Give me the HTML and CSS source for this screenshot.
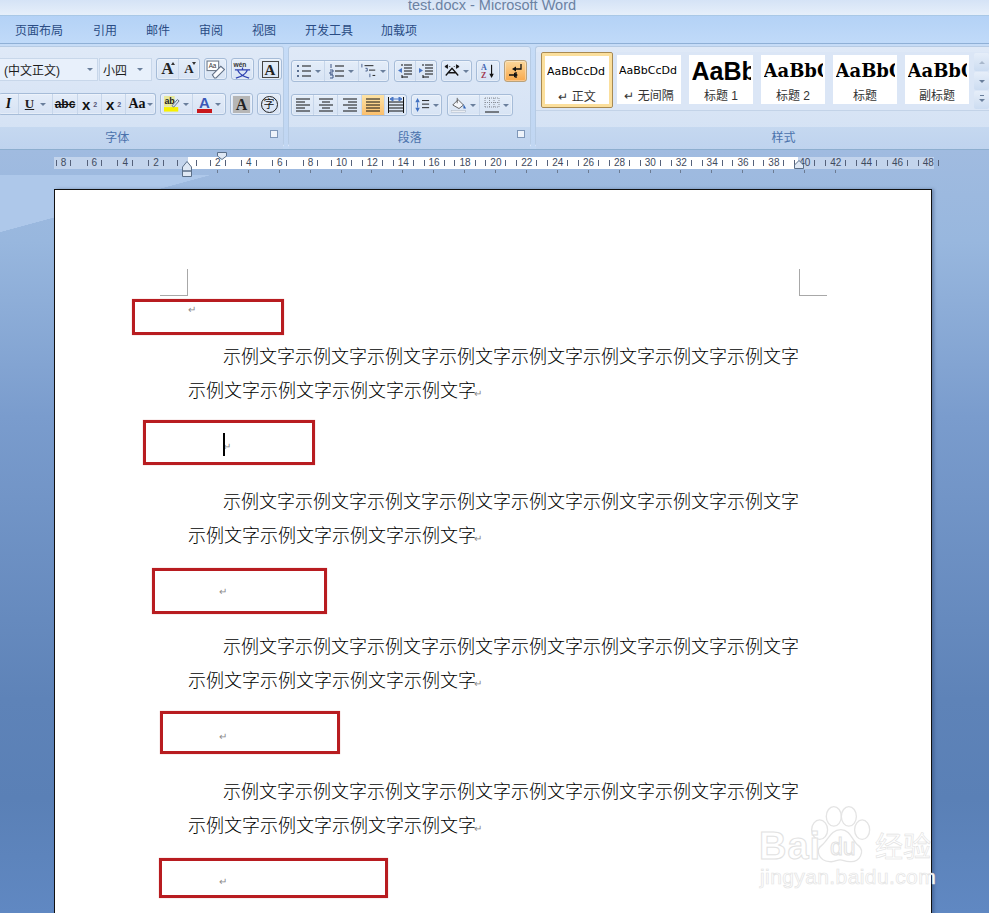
FILE: index.html
```html
<!DOCTYPE html>
<html lang="zh-CN">
<head>
  <meta charset="UTF-8">
  <title>test.docx - Microsoft Word</title>
  <link rel="stylesheet" href="styles.css">
</head>
<body>
  <div class="titlebar">test.docx - Microsoft Word</div>

  <nav class="tabs">
    <span class="tab tab-layout">页面布局</span>
    <span class="tab tab-ref">引用</span>
    <span class="tab tab-mail">邮件</span>
    <span class="tab tab-review">审阅</span>
    <span class="tab tab-view">视图</span>
    <span class="tab tab-dev">开发工具</span>
    <span class="tab tab-addin">加载项</span>
  </nav>

  <div class="ribbon">
    <!-- 字体 -->
    <section class="group group-font">
      <div class="group-body">
        <div class="row row-font-1">
          <div class="combo combo-font"><span>(中文正文)</span><i class="caret"></i></div>
          <div class="combo combo-size"><span>小四</span><i class="caret"></i></div>
          <div class="bgroup">
            <span class="btn w22 serif-a">A<i class="mini-up"></i></span>
            <span class="btn w20 serif-a small-a">A<i class="mini-down"></i></span>
          </div>
          <span class="bgroup btn w23">
            <svg class="ico ico-lg" viewBox="0 0 18 18"><rect x="1" y="1" width="11" height="9" fill="#fff" stroke="#6f7a8a"/><text x="2.500" y="8" class="svg-txt">Aa</text><path d="M6 14l8-8 3.500 3-8 8H8z" fill="#fbfcff" stroke="#5f6f85"/></svg>
          </span>
          <span class="bgroup btn w23">
            <svg class="ico ico-lg" viewBox="0 0 20 20"><text x="0.500" y="7" class="svg-wen">wén</text><path d="M10 8v2M2 10.500h16M5 11c2 4 6 6.500 12 8M15 11c-2 4-6 6.500-12 8" fill="none" stroke="#2b3fb0" stroke-width="1.300"/></svg>
          </span>
          <span class="bgroup btn w24"><b class="boxed-a">A</b></span>
        </div>
        <div class="row row-font-2">
          <div class="bgroup">
            <span class="btn w20 fmt-i">I</span>
            <span class="btn w34 fmt-u">U<i class="caret"></i></span>
            <span class="btn w25 fmt-s">abc</span>
            <span class="btn w24 fmt-x">x<sub>2</sub></span>
            <span class="btn w24 fmt-x">x<sup>2</sup></span>
            <span class="btn w29 fmt-aa">Aa<i class="caret"></i></span>
          </div>
          <div class="bgroup">
            <span class="btn w32">
              <svg class="ico" viewBox="0 0 18 18"><rect x="0" y="0" width="12" height="12" fill="#e8e89a"/><rect x="0" y="12.500" width="16" height="5" fill="#f7f000"/><text x="0.500" y="9" class="svg-ab">ab</text><path d="M9 11l6-7 2 1.500-6 7z" fill="#d9e2f0" stroke="#5f6f88"/></svg>
              <i class="caret"></i>
            </span>
            <span class="btn w32 color-a"><span class="color-a-in">A</span><i class="caret"></i></span>
          </div>
          <span class="bgroup btn w23"><b class="shade-a">A</b></span>
          <span class="bgroup btn w24"><span class="circle-zi">字</span></span>
        </div>
      </div>
      <div class="group-label">字体<i class="launcher"></i></div>
    </section>

    <!-- 段落 -->
    <section class="group group-para">
      <div class="group-body">
        <div class="row row-para-1">
          <div class="bgroup">
            <span class="btn w33">
              <svg class="ico" viewBox="0 0 16 16"><path d="M1 2h2v2H1zM1 7h2v2H1zM1 12h2v2H1z" fill="#5a6f90"/><path d="M6 3h9M6 8h9M6 13h9" stroke="#111" fill="none"/></svg>
              <i class="caret"></i>
            </span>
            <span class="btn w34">
              <svg class="ico" viewBox="0 0 16 16"><path d="M2 1v4M1 7h3v2H1v2h3M1 12h3v3H1" stroke="#3d5584" fill="none"/><path d="M6 3h9M6 8h9M6 13h9" stroke="#111" fill="none"/></svg>
              <i class="caret"></i>
            </span>
            <span class="btn w29">
              <svg class="ico" viewBox="0 0 18 18"><path d="M1 1v4M5 6h2v3h-2M10 12v4" stroke="#3d5584" fill="none"/><path d="M4 3h10M9 8h7M13 14h3" stroke="#111" fill="none"/></svg>
              <i class="caret"></i>
            </span>
          </div>
          <div class="bgroup gap-extra">
            <span class="btn w21">
              <svg class="ico" viewBox="0 0 16 16"><path d="M7 2h8M7 5h8M7 8h8M7 11h8M5 14h6M5 1v2M5 12v3" stroke="#111" fill="none"/><path d="M5 5L1 7.500 5 10z" fill="#4a76c4"/></svg>
            </span>
            <span class="btn w20">
              <svg class="ico" viewBox="0 0 16 16"><path d="M7 2h8M7 5h8M7 8h8M7 11h8M5 14h6M5 1v2M5 12v3" stroke="#111" fill="none"/><path d="M1 5l4 2.500-4 2.500z" fill="#4a76c4"/></svg>
            </span>
          </div>
          <span class="bgroup btn w31">
            <svg class="ico" viewBox="0 0 18 16"><path d="M2 13L9 5l7 8M4 10h10" stroke="#111" stroke-width="1.500" fill="none"/><path d="M1 3l3-2v4zM17 3l-3-2v4zM6 3h1M11 3h1" fill="#111" stroke="#111"/></svg>
            <i class="caret"></i>
          </span>
          <span class="bgroup btn w24">
            <svg class="ico" viewBox="0 0 18 18"><text x="1" y="8" class="svg-az blue-az">A</text><text x="1" y="17" class="svg-az red-az">Z</text><path d="M13 2v13" stroke="#111" fill="none" stroke-width="1.300"/><path d="M10.500 12h5L13 17z" fill="#111"/></svg>
          </span>
          <span class="bgroup btn w23 active-dark">
            <svg class="ico" viewBox="0 0 16 16"><path d="M13 1v5H7M1 12h7M8 9v6" stroke="#111" stroke-width="1.300" fill="none"/><path d="M8 3.500v5L4 6zM6 9.500v5L10 12z" fill="#111"/></svg>
          </span>
        </div>
        <div class="row row-para-2">
          <div class="bgroup">
            <span class="btn w22"><svg class="ico" viewBox="0 0 16 16"><path d="M1 2h14M1 5h9M1 8h14M1 11h9M1 14h14" stroke="#111" fill="none"/></svg></span>
            <span class="btn w24"><svg class="ico" viewBox="0 0 16 16"><path d="M1 2h14M4 5h8M1 8h14M4 11h8M1 14h14" stroke="#111" fill="none"/></svg></span>
            <span class="btn w24"><svg class="ico" viewBox="0 0 16 16"><path d="M1 2h14M6 5h9M1 8h14M6 11h9M1 14h14" stroke="#111" fill="none"/></svg></span>
            <span class="btn w23 active"><svg class="ico" viewBox="0 0 16 16"><path d="M1 2h14M1 5h14M1 8h14M1 11h14M1 14h14" stroke="#111" fill="none"/></svg></span>
            <span class="btn w21"><svg class="ico" viewBox="0 0 16 16"><path d="M1 5h14M1 8h14M1 11h14M1 14h14M0.500 0v16M15.500 0v16" stroke="#111" fill="none"/><path d="M2 2l3-2v4zM14 2l-3-2v4zM5 2h6" fill="#4a76c4" stroke="#4a76c4"/></svg></span>
          </div>
          <span class="bgroup btn w31">
            <svg class="ico" viewBox="0 0 16 18"><path d="M3 1L0.500 6h5zM3 17l-2.500-5h5z" fill="#3f6fc0"/><path d="M3 6v6" stroke="#3f6fc0" fill="none"/><path d="M8 4h8M8 8h8M8 12h8" stroke="#111" fill="none"/></svg>
            <i class="caret"></i>
          </span>
          <div class="bgroup gap-extra">
            <span class="btn w32">
              <svg class="ico" viewBox="0 0 18 18"><path d="M2 9l6-6 6 6-5 4z" fill="#f4f6fa" stroke="#555"/><path d="M7 1v6" stroke="#555" fill="none"/><path d="M14 8l3 5-3 0z" fill="#2f62b5"/><rect x="0" y="15" width="16" height="2" fill="#f4f6fa" stroke="#9aa5b5" stroke-width=".5"/></svg>
              <i class="caret"></i>
            </span>
            <span class="btn w32">
              <svg class="ico" viewBox="0 0 16 16"><path d="M1 1h14M1 5.500h14M1 10h14M1 1v9M5.500 1v9M10 1v9M15 1v9" stroke="#8a8f98" stroke-dasharray="1 1" fill="none"/><path d="M1 15h14" stroke="#111" fill="none"/></svg>
              <i class="caret"></i>
            </span>
          </div>
        </div>
      </div>
      <div class="group-label">段落<i class="launcher"></i></div>
    </section>

    <!-- 样式 -->
    <section class="group group-styles">
      <div class="group-body styles-body">
        <div class="gallery">
          <div class="style-item style-selected"><span class="preview pv-plain">AaBbCcDd</span><span class="cap">↵ 正文</span></div>
          <div class="style-item"><span class="preview pv-plain">AaBbCcDd</span><span class="cap">↵ 无间隔</span></div>
          <div class="style-item"><span class="preview pv-h1">AaBb</span><span class="cap">标题 1</span></div>
          <div class="style-item"><span class="preview pv-serif">AaBbC</span><span class="cap">标题 2</span></div>
          <div class="style-item"><span class="preview pv-serif">AaBbC</span><span class="cap">标题</span></div>
          <div class="style-item"><span class="preview pv-serif">AaBbC</span><span class="cap">副标题</span></div>
          <div class="scroller">
            <span class="scroll-btn"><i class="arrow-up"></i></span>
            <span class="scroll-btn"><i class="caret"></i></span>
            <span class="scroll-btn"><i class="caret caret-bar"></i></span>
          </div>
        </div>
      </div>
      <div class="group-label">样式</div>
    </section>
  </div>

  <main class="workspace">
    <div class="ruler-band">
      <div class="ruler">
        <span class="first">8</span><span>6</span><span>4</span><span>2</span><span class="blank"></span>
        <span>2</span><span>4</span><span>6</span><span>8</span><span>10</span>
        <span>12</span><span>14</span><span>16</span><span>18</span><span>20</span>
        <span>22</span><span>24</span><span>26</span><span>28</span><span>30</span>
        <span>32</span><span>34</span><span>36</span><span>38</span><span>40</span>
        <span>42</span><span>44</span><span>46</span><span>48</span>
        <svg class="indent indent-left" viewBox="0 0 10 16"><path d="M.5 6L5 .5 9.500 6v4h-9zM.5 10h9v5.500h-9z" fill="#dfe8f4" stroke="#5b6f88"/></svg>
        <svg class="indent indent-first" viewBox="0 0 10 8"><path d="M.5.5h9V4L5 7.500.5 4z" fill="#dfe8f4" stroke="#5b6f88"/></svg>
        <svg class="indent indent-right" viewBox="0 0 10 9"><path d="M.5 8.500V5L5 .5 9.500 5v3.500z" fill="#dfe8f4" stroke="#5b6f88"/></svg>
      </div>
      <div class="ruler-ticks"></div>
    </div>

    <div class="sheet">
      <i class="corner corner-left"></i>
      <i class="corner corner-right"></i>

      <p class="mark-line mark-first"><span class="pil">↵</span></p>

      <p class="para">示例文字示例文字示例文字示例文字示例文字示例文字示例文字示例文字示例文字示例文字示例文字示例文字<span class="pil">↵</span></p>
      <p class="mark-line mark-cursor"><i class="cursor"></i><span class="pil">↵</span></p>
      <p class="para">示例文字示例文字示例文字示例文字示例文字示例文字示例文字示例文字示例文字示例文字示例文字示例文字<span class="pil">↵</span></p>
      <p class="mark-line mark-indent"><span class="pil">↵</span></p>
      <p class="para">示例文字示例文字示例文字示例文字示例文字示例文字示例文字示例文字示例文字示例文字示例文字示例文字<span class="pil">↵</span></p>
      <p class="mark-line mark-indent"><span class="pil">↵</span></p>
      <p class="para">示例文字示例文字示例文字示例文字示例文字示例文字示例文字示例文字示例文字示例文字示例文字示例文字<span class="pil">↵</span></p>
      <p class="mark-line mark-indent"><span class="pil">↵</span></p>
    </div>

    <div class="redbox rb1"></div>
    <div class="redbox rb2"></div>
    <div class="redbox rb3"></div>
    <div class="redbox rb4"></div>
    <div class="redbox rb5"></div>

    <div class="watermark">
      <svg class="paw" viewBox="0 0 70 66">
        <g fill="#fff" stroke="#e4e4e4" stroke-width="1.500">
          <ellipse cx="12" cy="27" rx="9" ry="11"/>
          <ellipse cx="28" cy="12" rx="8.500" ry="11"/>
          <ellipse cx="45" cy="12" rx="8.500" ry="11"/>
          <ellipse cx="60" cy="27" rx="8.500" ry="11"/>
          <path d="M36 27c11 0 13 13 20 18 7 6 2 19-10 18-6 0-7-2-11-2s-6 3-12 2C11 62 7 50 14 45c8-6 10-18 22-18z"/>
        </g>
      </svg>
      <span class="wm-bai">Bai</span>
      <span class="wm-du">du</span>
      <span class="wm-jy">经验</span>
      <span class="wm-url">jingyan.baidu.com</span>
    </div>
  </main>
</body>
</html>
```

FILE: styles.css
```css
* {
  box-sizing: border-box;
}
html, body {
  margin: 0;
  padding: 0;
  height: 100%;
  overflow: hidden;
}
body {
  display: flex;
  flex-direction: column;
  font-family: "Liberation Sans", "Noto Sans CJK SC", sans-serif;
  background: #bdd3ef;
  color: #111;
}
i {
  font-style: normal;
}

/* title + tabs */
.titlebar {
  height: 16px;
  flex-shrink: 0;
  background: linear-gradient(#d5e3f6, #e6effa);
  border-bottom: 1px solid #a9c8e6;
  color: #6c82a3;
  font-size: 14.500px;
  line-height: 10px;
  text-align: center;
  padding-right: 5px;
  overflow: hidden;
}
.tabs {
  height: 28px;
  flex-shrink: 0;
  display: flex;
  align-items: center;
  background: linear-gradient(#b4d2f6, #c0daf9);
  border-bottom: 1px solid #8fb0d6;
  color: #2a4c84;
  font-size: 12px;
  padding-left: 15px;
}
.tab-ref { margin-left: 30px; }
.tab-mail, .tab-review, .tab-view { margin-left: 29px; }
.tab-dev { margin-left: 29px; }
.tab-addin { margin-left: 28px; }

/* ribbon */
.ribbon {
  height: 106px;
  flex-shrink: 0;
  display: flex;
  gap: 4px;
  padding: 2px 0 3px;
  background: linear-gradient(#c6dcf7, #c0d6f2);
  border-bottom: 1px solid #8daecf;
}
.group {
  display: flex;
  flex-direction: column;
  border: 1px solid #b6cbe4;
  border-radius: 3px;
  background: linear-gradient(#dfe9f7, #d3e1f4);
  box-shadow: 0 1px 0 #eef5fd;
}
.group-font {
  width: 285px;
  border-left: 0;
  border-radius: 0 3px 3px 0;
}
.group-para {
  width: 243px;
}
.group-styles {
  flex: 1;
  border-right: 0;
  border-radius: 3px 0 0 3px;
}
.group-body {
  height: 80px;
  flex-shrink: 0;
}
.group-label {
  flex: 1;
  position: relative;
  background: linear-gradient(#c5d8f0, #bfd3ee);
  color: #4a72ac;
  font-size: 12px;
  line-height: 22px;
  text-align: center;
}
.group-font .group-label {
  padding-right: 49px;
}
.group-styles .group-label {
  padding-left: 42px;
}
.launcher {
  position: absolute;
  right: 5px;
  top: 3px;
  width: 8px;
  height: 8px;
  border: 1px solid #7f97b8;
  background: #eef3fa;
}
.row {
  display: flex;
}
.row-font-1 { gap: 4px; margin-top: 11px; }
.row-font-1 .combo-size { margin-left: -3px; }
.row-font-2 { gap: 4px; margin-top: 12px; }
.row-font-2 > .bgroup:first-child { margin-left: -1px; border-left: 0; }
.row-para-1 { gap: 4px; margin: 13px 0 0 2px; }
.row-para-2 { gap: 4px; margin: 12px 0 0 2px; }
.gap-extra { margin-left: 1px; }

.combo {
  height: 23px;
  display: flex;
  align-items: center;
  justify-content: space-between;
  background: #e8f0fb;
  border: 1px solid #c8d7ea;
  font-size: 12px;
  color: #1d1d1d;
}
.combo-font { width: 98px; padding: 0 4px 0 4px; border-left: 0; }
.combo-size { width: 53px; padding: 0 8px 0 3px; }

.bgroup {
  display: flex;
  height: 22px;
  border: 1px solid #a6bcd8;
  border-radius: 3px;
  background: linear-gradient(#e4edf9, #d7e3f4);
  box-shadow: inset 0 0 0 1px rgba(255, 255, 255, .35);
}
.btn {
  display: flex;
  align-items: center;
  justify-content: center;
  gap: 3px;
  position: relative;
  height: 100%;
  border-right: 1px solid #c7d6ea;
}
.bgroup > .btn:last-child,
.bgroup.btn {
  border-right: 0;
}
.bgroup.btn {
  height: 22px;
  border: 1px solid #a6bcd8;
}
.w20 { width: 20px; }
.w21 { width: 21px; }
.w22 { width: 22px; }
.w23 { width: 23px; }
.w24 { width: 24px; }
.w25 { width: 25px; }
.w29 { width: 29px; }
.w31 { width: 31px; }
.w32 { width: 32px; }
.w33 { width: 33px; }
.w34 { width: 34px; }
.ico {
  width: 16px;
  height: 16px;
  flex-shrink: 0;
}
.ico-lg {
  width: 19px;
  height: 19px;
}
.caret {
  display: inline-block;
  flex-shrink: 0;
  width: 0;
  height: 0;
  border-left: 3px solid transparent;
  border-right: 3px solid transparent;
  border-top: 3px solid #6a7f9c;
}
.caret-bar {
  box-shadow: 0 -5px 0 -1px #6a7f9c;
}
.active {
  background: linear-gradient(#fde3a6, #fbbf6c);
}
.active-dark,
.bgroup.active-dark {
  background: linear-gradient(#fbd79a, #f8a94d);
  border-color: #b9a27c;
}

.serif-a, .boxed-a, .shade-a, .fmt-i, .fmt-u, .fmt-s, .fmt-x, .fmt-aa, .color-a-in {
  font-family: "Liberation Serif", serif;
  font-weight: bold;
}
.serif-a { font-size: 17px; color: #222; }
.small-a { font-size: 13px; }
.mini-up, .mini-down {
  position: absolute;
  top: 3px;
  right: 3px;
  border-left: 2.500px solid transparent;
  border-right: 2.500px solid transparent;
}
.mini-up { border-bottom: 3px solid #333; }
.mini-down { border-top: 3px solid #333; }
.boxed-a {
  width: 17px;
  height: 17px;
  border: 1px solid #444;
  font-size: 15px;
  line-height: 16px;
  text-align: center;
  color: #222;
}
.shade-a {
  width: 17px;
  height: 17px;
  background: #b6b6b6;
  font-size: 16px;
  line-height: 17px;
  text-align: center;
  color: #222;
}
.circle-zi {
  width: 17px;
  height: 17px;
  border: 1px solid #222;
  border-radius: 50%;
  font-size: 11px;
  line-height: 15px;
  text-align: center;
}
.fmt-i { font-style: italic; font-size: 14px; }
.fmt-u { font-size: 13px; text-decoration: underline; gap: 6px; color: #222; }
.fmt-s { font-size: 12px; text-decoration: line-through; font-family: "Liberation Sans", sans-serif; }
.fmt-x { font-size: 15px; font-family: "Liberation Sans", sans-serif; }
.fmt-x sub, .fmt-x sup { font-size: 7px; color: #557; }
.fmt-aa { font-size: 14px; gap: 1px; }
.color-a-in {
  width: 15px;
  height: 17px;
  border-bottom: 4px solid #c8181c;
  color: #3b58b8;
  font-size: 15px;
  line-height: 13px;
  text-align: center;
  font-family: "Liberation Sans", sans-serif;
}
.svg-txt { font: 6px "Liberation Sans", sans-serif; fill: #333; }
.svg-wen { font: bold 7px "Liberation Sans", sans-serif; fill: #333; }
.svg-ab { font: bold 10px "Liberation Sans", sans-serif; fill: #222; }
.svg-az { font: bold 9px "Liberation Serif", serif; }
.blue-az { fill: #3d62b0; }
.red-az { fill: #a0384e; }

/* styles gallery */
.styles-body {
  padding-top: 5px;
}
.gallery {
  height: 59px;
  display: flex;
  align-items: center;
  gap: 8px;
  padding: 0 0 3px 5px;
  border-bottom: 1px solid #c3d3e8;
  background: #dbe6f6;
}
.style-item {
  width: 64px;
  height: 49px;
  flex-shrink: 0;
  display: flex;
  flex-direction: column;
  align-items: center;
  background: #fff;
  overflow: hidden;
}
.style-selected {
  width: 72px;
  height: 56px;
  margin-right: -4px;
  border: 1px solid #a88a52;
  border-radius: 2px;
  box-shadow: inset 0 0 0 3px #fbdf9c;
}
.style-selected .preview { margin-top: 3px; }
.preview {
  height: 33px;
  width: 59px;
  flex-shrink: 0;
  overflow: hidden;
  white-space: nowrap;
  text-align: left;
  line-height: 32px;
  color: #000;
}
.pv-plain { font-family: "DejaVu Sans", sans-serif; font-size: 11px; width: 60px; }
.pv-h1 { font-size: 25px; font-weight: bold; }
.pv-serif { font-family: "DejaVu Serif", "Liberation Serif", serif; font-size: 18px; font-weight: bold; }
.cap {
  font-size: 12px;
  line-height: 17px;
  color: #333;
}
.scroller {
  margin-left: -3px;
  width: 15px;
  display: flex;
  flex-direction: column;
  gap: 1px;
  align-self: flex-start;
  margin-top: 1px;
}
.scroll-btn {
  height: 18px;
  display: flex;
  align-items: center;
  justify-content: center;
  background: linear-gradient(#e6eef9, #ccdcf1);
  border-radius: 2px;
}
.arrow-up {
  border-left: 3px solid transparent;
  border-right: 3px solid transparent;
  border-bottom: 3px solid #a9b8cc;
}

/* workspace */
.workspace {
  flex: 1;
  position: relative;
  min-height: 0;
  overflow: hidden;
  background:
    linear-gradient(to bottom right, #aec8ea 50%, transparent 50.300%) 0 25px / 210px 57px no-repeat,
    linear-gradient(#a0bbe0 0, #98b7de 12%, #7a9ccd 35%, #5e83b8 72%, #5a80b6 85%, #6088c2 100%);
}
.ruler-band {
  height: 27px;
  padding: 7px 0 0 54px;
}
.ruler {
  position: relative;
  width: 880px;
  height: 12px;
  display: flex;
  background: linear-gradient(90deg, #c3d4ec 0, #c3d4ec 134px, #fff 134px, #fff 744px, #c3d4ec 744px);
  font-size: 10px;
  line-height: 12px;
  color: #3e4a5e;
}
.ruler span {
  width: 30.900px;
  flex-shrink: 0;
  display: flex;
  justify-content: center;
  align-items: center;
  gap: 4px;
}
.ruler .first {
  margin-left: -6px;
}
.ruler span::before,
.ruler span::after {
  content: "";
  width: 1px;
  height: 6px;
  background: #55617a;
}
.ruler .blank {
  gap: 18px;
}
.ruler-ticks {
  height: 3px;
  margin: 1px 0 0 163px;
  width: 620px;
  background: repeating-linear-gradient(90deg, #6c7b92 0, #6c7b92 1px, transparent 1px, transparent 30.900px);
}
.indent {
  position: absolute;
}
.indent-left { left: 128px; top: 4px; width: 10px; height: 16px; }
.indent-first { left: 163px; top: -5px; width: 10px; height: 8px; }
.indent-right { left: 740px; top: 3px; width: 10px; height: 9px; }

.sheet {
  position: relative;
  width: 878px;
  height: 800px;
  margin: 12px 0 0 54px;
  padding: 102px 131px 0 133px;
  background: #fff;
  border: 1px solid #111;
  box-shadow: 2px 0 3px rgba(30, 50, 90, .35);
  font-family: "Noto Sans CJK SC", sans-serif;
  font-size: 18px;
  font-weight: 300;
  color: #000;
}
.corner {
  position: absolute;
  top: 79px;
  width: 28px;
  height: 27px;
  border-bottom: 1px solid #a8a8a8;
}
.corner-left { left: 105px; border-right: 1px solid #a8a8a8; }
.corner-right { left: 744px; border-left: 1px solid #a8a8a8; }
.mark-line {
  position: relative;
  margin: 0 0 21.500px;
  height: 34px;
  line-height: 34px;
}
.mark-first {
  margin-bottom: 12px;
}
.mark-indent {
  padding-left: 31px;
}
.mark-cursor {
  padding-left: 35px;
}
.para {
  margin: 0 0 21.500px;
  line-height: 34px;
  text-indent: 35px;
  word-break: break-all;
}
.pil {
  font-family: "DejaVu Sans", sans-serif;
  font-size: 10px;
  line-height: 1;
  color: #8b8b8b;
}
.para .pil {
  margin-left: -2px;
}
.mark-line .pil {
  vertical-align: 3px;
}
.mark-first .pil {
  vertical-align: 4px;
}
.cursor {
  position: absolute;
  left: 35px;
  top: 5px;
  width: 2px;
  height: 23px;
  background: #000;
}
.redbox {
  position: absolute;
  border: 3.500px solid #b81c20;
  box-shadow: 0 0 1px #d99;
}
.rb1 { left: 132px; top: 149px; width: 152px; height: 36px; }
.rb2 { left: 143px; top: 270px; width: 172px; height: 45px; }
.rb3 { left: 152px; top: 418px; width: 175px; height: 46px; }
.rb4 { left: 160px; top: 561px; width: 180px; height: 43px; }
.rb5 { left: 159px; top: 708px; width: 229px; height: 40px; }

/* watermark */
.watermark {
  position: absolute;
  left: 759px;
  top: 655px;
  width: 178px;
  height: 90px;
  color: #fff;
  -webkit-text-stroke: 1px #e2e2e2;
  font-family: "Liberation Sans", sans-serif;
}
.paw {
  position: absolute;
  left: 50px;
  top: 0;
  width: 62px;
  height: 60px;
}
.watermark span {
  position: absolute;
  white-space: nowrap;
}
.wm-bai { left: 0; top: 20px; font-size: 38px; font-weight: bold; letter-spacing: 1px; }
.wm-du { left: 71px; top: 29px; font-size: 23px; }
.wm-jy { left: 116px; top: 20px; font-size: 28px; font-family: "Noto Sans CJK SC", sans-serif; -webkit-text-stroke: .6px #e2e2e2; }
.wm-url { left: 1px; top: 60px; font-size: 21px; -webkit-text-stroke: .7px #e4e4e4; letter-spacing: .4px; }
```
